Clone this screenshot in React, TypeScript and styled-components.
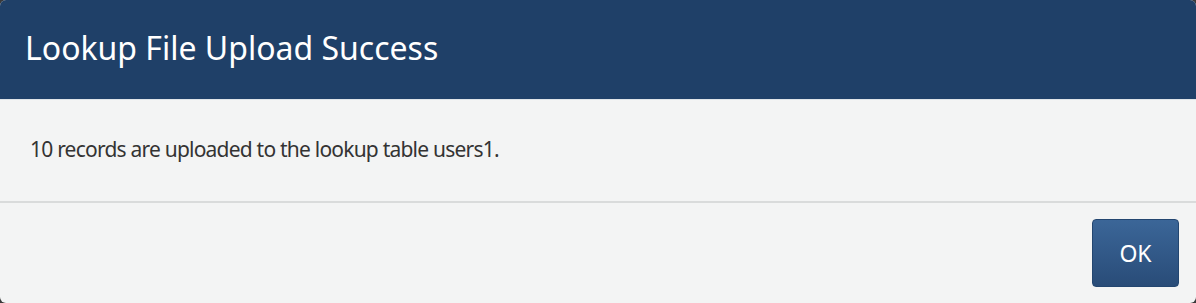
import React from 'react'
import styled, { createGlobalStyle } from 'styled-components'

const GlobalStyle = createGlobalStyle`
    html, body {
        margin: 0;
        padding: 0;
        background: #3a3a3a;
    }
    #root {
        width: 1196px;
        height: 303px;
    }
`

const Modal = styled.div`
    display: flex;
    flex-direction: column;
    width: 1196px;
    height: 303px;
    border-radius: 6px;
    overflow: hidden;
    background-color: #f3f4f4;
    font-family: 'Noto Sans', 'Open Sans', sans-serif;
`

const ModalHeader = styled.div`
    display: flex;
    align-items: center;
    height: 100px;
    padding: 0 0 4px 25px;
    box-sizing: border-box;
    background-color: #1f4068;
    border-bottom: 1px solid #dfe4e8;
`

const Title = styled.h3`
    margin: 0;
    color: #ffffff;
    font-size: 32px;
    font-weight: 400;
`

const ModalBody = styled.div`
    display: flex;
    align-items: center;
    height: 103px;
    padding: 0 30px 4px;
    box-sizing: border-box;
    border-bottom: 2px solid #d9dbdb;
`

const Message = styled.p`
    margin: 0;
    color: #333333;
    font-size: 21px;
    letter-spacing: -0.78px;
`

const ModalFooter = styled.div`
    display: flex;
    flex: 1;
    align-items: center;
    justify-content: flex-end;
    padding: 0 17px 0 0;
`

const Button = styled.button`
    width: 87px;
    height: 68px;
    border: 1px solid #234670;
    border-radius: 4px;
    background: linear-gradient(#3b6698, #294c78);
    color: #ffffff;
    font-family: inherit;
    font-size: 23px;
    cursor: pointer;
`

const App = () => {
    return (
        <>
            <GlobalStyle />
            <Modal>
                <ModalHeader>
                    <Title>Lookup File Upload Success</Title>
                </ModalHeader>
                <ModalBody>
                    <Message>10 records are uploaded to the lookup table users1.</Message>
                </ModalBody>
                <ModalFooter>
                    <Button>OK</Button>
                </ModalFooter>
            </Modal>
        </>
    )
}

export default App
